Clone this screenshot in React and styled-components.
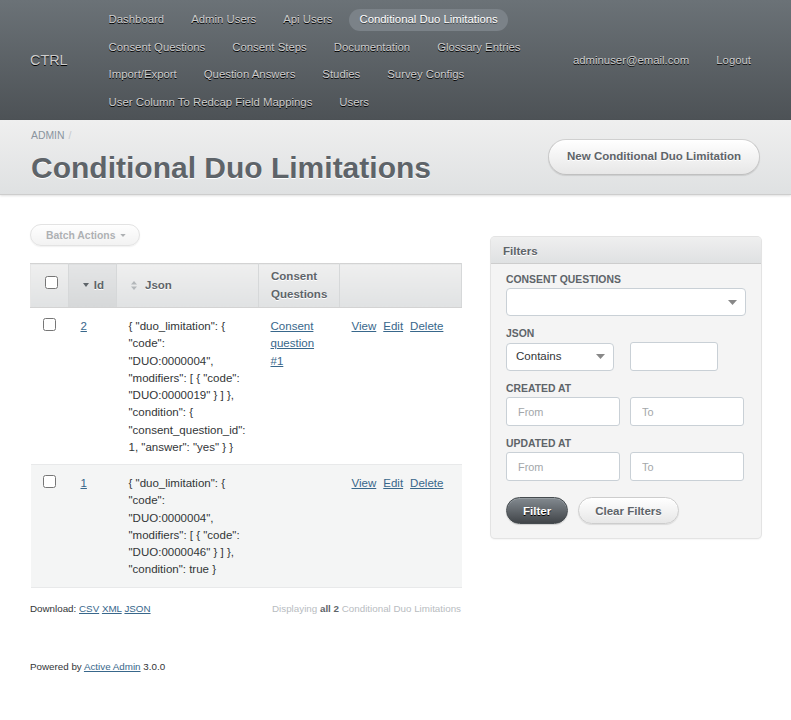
import styled, { createGlobalStyle } from 'styled-components'

const GlobalStyle = createGlobalStyle`
  html, body {
    margin: 0;
    padding: 0;
    background: #fff;
  }
  body {
    font-family: "Liberation Sans", Arial, Helvetica, sans-serif;
    font-size: 11.52px;
    line-height: 1.5;
    color: #323537;
  }
`

const tabs = [
  'Dashboard', 'Admin Users', 'Api Users', 'Conditional Duo Limitations',
  'Consent Questions', 'Consent Steps', 'Documentation', 'Glossary Entries',
  'Import/Export', 'Question Answers', 'Studies', 'Survey Configs',
  'User Column To Redcap Field Mappings', 'Users',
]

const rows = [
  {
    id: 2,
    json: '{ "duo_limitation": { "code": "DUO:0000004", "modifiers": [ { "code": "DUO:0000019" } ] }, "condition": { "consent_question_id": 1, "answer": "yes" } }',
    question: 'Consent question #1',
  },
  {
    id: 1,
    json: '{ "duo_limitation": { "code": "DUO:0000004", "modifiers": [ { "code": "DUO:0000046" } ] }, "condition": true }',
    question: null,
  },
]

const Caret = ({ color = '#888' }) => (
  <svg width="9" height="5" viewBox="0 0 9 5">
    <path d="M0 0 L9 0 L4.5 5 Z" fill={color} />
  </svg>
)

const SortIcon = ({ dir }) => (
  <SortMark>
    {dir === 'desc' ? (
      <svg width="6" height="4" viewBox="0 0 6 4">
        <path d="M0 0 L6 0 L3 4 Z" fill="#5e6469" />
      </svg>
    ) : (
      <svg width="6" height="9" viewBox="0 0 6 9">
        <path d="M0 3.5 L6 3.5 L3 0 Z" fill="#b3b7ba" />
        <path d="M0 5.5 L6 5.5 L3 9 Z" fill="#b3b7ba" />
      </svg>
    )}
  </SortMark>
)

const App = () => {
  return (
    <>
      <GlobalStyle />
      <Header>
        <SiteTitle>CTRL</SiteTitle>
        <Tabs>
          {tabs.map((t) => (
            <TabLink key={t} $current={t === 'Conditional Duo Limitations'}>{t}</TabLink>
          ))}
        </Tabs>
        <UtilityNav>
          <TabLink>adminuser@email.com</TabLink>
          <TabLink>Logout</TabLink>
        </UtilityNav>
      </Header>

      <TitleBar>
        <TitleLeft>
          <Breadcrumbs>ADMIN<Sep>/</Sep></Breadcrumbs>
          <PageTitle>Conditional Duo Limitations</PageTitle>
        </TitleLeft>
        <ActionButton>New Conditional Duo Limitation</ActionButton>
      </TitleBar>

      <Content>
        <Main>
          <BatchButton>Batch Actions <Caret color="#5e6469" /></BatchButton>
          <IndexTable>
            <colgroup>
              <col style={{ width: 38 }} />
              <col style={{ width: 48 }} />
              <col style={{ width: 142 }} />
              <col style={{ width: 81 }} />
              <col style={{ width: 122 }} />
            </colgroup>
            <thead>
              <tr>
                <Th $check><CheckBox type="checkbox" /></Th>
                <Th $sorted><ThInner><SortIcon dir="desc" />Id</ThInner></Th>
                <Th><ThInner><SortIcon />Json</ThInner></Th>
                <Th>Consent Questions</Th>
                <Th />
              </tr>
            </thead>
            <tbody>
              {rows.map((r, i) => (
                <Row key={r.id} $odd={i % 2 === 1}>
                  <Td><CheckBox type="checkbox" /></Td>
                  <Td><Link href="#">{r.id}</Link></Td>
                  <Td>{r.json}</Td>
                  <Td>{r.question && <Link href="#">{r.question}</Link>}</Td>
                  <Td>
                    <Actions>
                      <Link href="#">View</Link>
                      <Link href="#">Edit</Link>
                      <Link href="#">Delete</Link>
                    </Actions>
                  </Td>
                </Row>
              ))}
            </tbody>
          </IndexTable>
          <IndexFooter>
            <span>
              Download: <Link href="#">CSV</Link> <Link href="#">XML</Link> <Link href="#">JSON</Link>
            </span>
            <PageInfo>Displaying <b>all 2</b> Conditional Duo Limitations</PageInfo>
          </IndexFooter>
        </Main>

        <Sidebar>
          <Panel>
            <PanelHeader>Filters</PanelHeader>
            <PanelBody>
              <FilterGroup>
                <FilterLabel>Consent Questions</FilterLabel>
                <SelectBox $width="240px"><span /><Caret /></SelectBox>
              </FilterGroup>
              <FilterGroup>
                <FilterLabel>Json</FilterLabel>
                <FilterRow $align="center">
                  <SelectBox $width="108px">Contains<Caret /></SelectBox>
                  <TextInput $width="88px" $ml="6px" />
                </FilterRow>
              </FilterGroup>
              <FilterGroup>
                <FilterLabel>Created At</FilterLabel>
                <FilterRow>
                  <TextInput placeholder="From" />
                  <TextInput placeholder="To" />
                </FilterRow>
              </FilterGroup>
              <FilterGroup>
                <FilterLabel>Updated At</FilterLabel>
                <FilterRow>
                  <TextInput placeholder="From" />
                  <TextInput placeholder="To" />
                </FilterRow>
              </FilterGroup>
              <ButtonRow>
                <DarkButton>Filter</DarkButton>
                <LightButton>Clear Filters</LightButton>
              </ButtonRow>
            </PanelBody>
          </Panel>
        </Sidebar>
      </Content>

      <Footer>
        Powered by <Link href="#">Active Admin</Link> 3.0.0
      </Footer>
    </>
  )
}

const Header = styled.header`
  display: flex;
  align-items: center;
  height: 120px;
  box-sizing: border-box;
  padding: 2px 30px 0;
  background: linear-gradient(180deg, #6b7277 0%, #4d5256 100%);
`

const SiteTitle = styled.h1`
  margin: 0 31px 0 0;
  font-size: 14.4px;
  font-weight: normal;
  color: #cdcdcd;
  text-shadow: #000 0 1px 0;
  white-space: nowrap;
`

const Tabs = styled.nav`
  flex: 1;
  display: flex;
  flex-wrap: wrap;
  column-gap: 7px;
  row-gap: 5.5px;
`

const UtilityNav = styled.nav`
  display: flex;
  gap: 7px;
`

const TabLink = styled.a`
  display: block;
  padding: 2.5px 10px;
  border-radius: 20px;
  font-size: 11.36px;
  color: ${(p) => (p.$current ? '#fff' : '#cdcdcd')};
  background: ${(p) => (p.$current ? '#7b8288' : 'transparent')};
  text-shadow: ${(p) => (p.$current ? '#3d4246 0 1px 0' : '#000 0 1px 0')};
  white-space: nowrap;
  cursor: pointer;
`

const TitleBar = styled.div`
  display: flex;
  align-items: center;
  justify-content: space-between;
  height: 75px;
  box-sizing: border-box;
  padding: 0 31px;
  background: linear-gradient(180deg, #efefef 0%, #dfe1e2 100%);
  border-bottom: 1px solid #cdcdcd;
  box-shadow: 0 1px 2px rgba(0, 0, 0, 0.12);
`

const TitleLeft = styled.div`
  display: flex;
  flex-direction: column;
`

const Breadcrumbs = styled.div`
  font-size: 10.4px;
  line-height: 15.5px;
  color: #8a949e;
  margin-bottom: 7px;
`

const Sep = styled.span`
  margin: 0 4px;
  color: #c6cacd;
`

const PageTitle = styled.h2`
  margin: 0;
  font-size: 30px;
  line-height: 36px;
  font-weight: bold;
  color: #5e6469;
  text-shadow: #fff 0 1px 0;
`

const ActionButton = styled.a`
  display: inline-block;
  padding: 8px 18px;
  border-radius: 200px;
  border: 1px solid #d0d0d0;
  border-color: #d0d0d0 #c8c8c8 #c0c0c0;
  background: linear-gradient(180deg, #ffffff 0%, #e7e7e7 100%);
  box-shadow: 0 1px 1px rgba(0, 0, 0, 0.1), inset 0 1px 0 #fff;
  color: #5e6469;
  font-weight: bold;
  text-shadow: #fff 0 1px 0;
  cursor: pointer;
`

const Content = styled.div`
  display: flex;
  gap: 30px;
  padding: 29px 30px 0;
`

const Main = styled.div`
  flex: 1;
  min-width: 0;
`

const BatchButton = styled.button`
  display: inline-flex;
  align-items: center;
  gap: 5px;
  height: 22px;
  padding: 0 13px 0 15px;
  margin-bottom: 17px;
  border-radius: 200px;
  border: 1px solid #c8c8c8;
  background: linear-gradient(180deg, #ffffff 0%, #e7e7e7 100%);
  box-shadow: 0 1px 1px rgba(0, 0, 0, 0.1);
  font-family: inherit;
  font-size: 10.4px;
  font-weight: bold;
  color: #5e6469;
  opacity: 0.5;
  svg { width: 6px; height: 3px; }
`

const IndexTable = styled.table`
  width: 100%;
  table-layout: fixed;
  border-collapse: collapse;
  border-spacing: 0;
`

const Th = styled.th`
  height: 44px;
  box-sizing: border-box;
  padding: ${(p) => (p.$check ? '0 12px 0 14px' : '0 12px')};
  text-align: left;
  vertical-align: middle;
  font-weight: bold;
  color: #5e6469;
  text-shadow: #fff 0 1px 0;
  background: ${(p) => (p.$sorted
    ? 'linear-gradient(180deg, #e4e5e6 0%, #d6d8d9 100%)'
    : 'linear-gradient(180deg, #efefef 0%, #e0e2e3 100%)')};
  border: 1px solid #d3d3d3;
  border-left-color: #e6e6e6;
  border-right-color: #d6d8d9;
`

const ThInner = styled.span`
  display: flex;
  align-items: center;
`

const SortMark = styled.span`
  display: inline-flex;
  width: 14px;
  align-items: center;
  justify-content: flex-start;
  padding-left: 2px;
`

const Row = styled.tr`
  background: ${(p) => (p.$odd ? '#f4f5f5' : '#fff')};
  border-bottom: 1px solid #e8e9ea;
`

const Td = styled.td`
  padding: 10px 12px 8px;
  vertical-align: top;
`

const CheckBox = styled.input`
  margin: 0;
  width: 13px;
  height: 13px;
  vertical-align: baseline;
`

const Link = styled.a`
  color: #38678b;
  text-decoration: underline;
`

const Actions = styled.span`
  white-space: nowrap;
  a { margin-right: 7px; }
`

const IndexFooter = styled.div`
  display: flex;
  justify-content: space-between;
  margin-top: 14px;
  font-size: 9.8px;
  color: #323537;
`

const PageInfo = styled.span`
  color: #b8bcbf;
  b { color: #5e6469; }
`

const Sidebar = styled.aside`
  width: 270px;
  flex-shrink: 0;
  padding-top: 13px;
`

const Panel = styled.div`
  background: #f4f4f4;
  border-radius: 4px;
  box-shadow: 0 0 0 1px #e3e3e3, 0 1px 2px rgba(0, 0, 0, 0.12);
`

const PanelHeader = styled.h3`
  margin: 0;
  height: 27px;
  box-sizing: border-box;
  padding: 1px 12px 0;
  line-height: 26px;
  font-size: 11.52px;
  font-weight: bold;
  color: #5e6469;
  text-shadow: #fff 0 1px 0;
  border-radius: 4px 4px 0 0;
  background: linear-gradient(180deg, #efefef 0%, #dfe1e2 100%);
  border-bottom: 1px solid #cdcdcd;
`

const PanelBody = styled.div`
  padding: 8px 15px 14px;
`

const FilterGroup = styled.div`
  margin-bottom: 10px;
`

const FilterLabel = styled.label`
  display: block;
  font-size: 10.4px;
  line-height: 16px;
  font-weight: bold;
  text-transform: uppercase;
  color: #5e6469;
`

const FilterRow = styled.div`
  display: flex;
  align-items: ${(p) => p.$align || 'flex-start'};
  gap: 10px;
`

const SelectBox = styled.div`
  display: flex;
  align-items: center;
  justify-content: space-between;
  width: ${(p) => p.$width};
  height: 28px;
  box-sizing: border-box;
  padding: 0 8px 0 9px;
  background: #fff;
  border: 1px solid #c9d0d6;
  border-radius: 4px;
  font-size: 11.52px;
  color: #323537;
`

const TextInput = styled.input`
  width: ${(p) => p.$width || '114px'};
  height: 29px;
  margin-left: ${(p) => p.$ml || '0'};
  box-sizing: border-box;
  padding: 0 11px;
  background: #fff;
  border: 1px solid #c9d0d6;
  border-radius: 3px;
  font-family: inherit;
  font-size: 10.9px;
  color: #323537;
  &::placeholder { color: #a3a7aa; }
`

const ButtonRow = styled.div`
  display: flex;
  gap: 10px;
  padding-top: 6px;
`

const DarkButton = styled.button`
  height: 27px;
  padding: 0 16px;
  border-radius: 200px;
  border: 1px solid #454b4f;
  background: linear-gradient(180deg, #838a90 0%, #414549 100%);
  box-shadow: 0 1px 1px rgba(0, 0, 0, 0.15), inset 0 1px 0 #959ca1;
  color: #fff;
  font-family: inherit;
  font-size: 11.52px;
  font-weight: bold;
  text-shadow: #000 0 1px 0;
`

const LightButton = styled.button`
  height: 27px;
  padding: 0 16px;
  border-radius: 200px;
  border: 1px solid #cdcdcd;
  background: linear-gradient(180deg, #ffffff 0%, #e7e7e7 100%);
  box-shadow: 0 1px 1px rgba(0, 0, 0, 0.1), inset 0 1px 0 #fff;
  color: #5e6469;
  font-family: inherit;
  font-size: 11.52px;
  font-weight: bold;
  text-shadow: #fff 0 1px 0;
`

const Footer = styled.footer`
  padding: 44px 30px 30px;
  font-size: 9.8px;
  color: #323537;
`

export default App
